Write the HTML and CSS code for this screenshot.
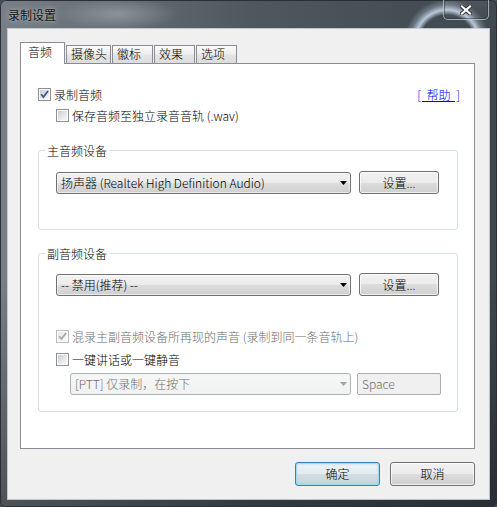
FILE: index.html
```html
<!DOCTYPE html>
<html lang="zh-CN">
<head>
<meta charset="utf-8">
<title>录制设置</title>
<link rel="stylesheet" href="styles.css">
</head>
<body>
<div class="window">
  <div class="titlebar">
    <div class="title">录制设置</div>
    <div class="close">
      <svg width="12" height="10" viewBox="0 0 12 10">
        <path d="M2 1.5 L10 8.5 M10 1.5 L2 8.5" stroke="#2a2f35" stroke-width="4" stroke-linecap="square"/>
        <path d="M2 1.5 L10 8.5 M10 1.5 L2 8.5" stroke="#ffffff" stroke-width="2.2" stroke-linecap="square"/>
      </svg>
    </div>
  </div>
  <div class="client">
    <div class="tabs">
      <div class="tab active">音频</div>
      <div class="tab">摄像头</div>
      <div class="tab">徽标</div>
      <div class="tab">效果</div>
      <div class="tab">选项</div>
    </div>
    <div class="panel">
      <div class="row-top">
        <div class="check">
          <span class="cb"><svg width="9" height="9" viewBox="0 0 9 9"><path d="M1.2 4.2 L3.4 7 L8 1" fill="none" stroke="#3d5592" stroke-width="1.8"/></svg></span>
          <span>录制音频</span>
        </div>
        <a class="help">[ 帮助 ]</a>
      </div>
      <div class="check sub">
        <span class="cb"></span>
        <span>保存音频至独立录音音轨 (.wav)</span>
      </div>

      <fieldset class="group g1">
        <legend>主音频设备</legend>
        <div class="group-body">
          <div class="dev-row">
            <div class="combo"><span>扬声器 (Realtek High Definition Audio)</span><svg class="arrow" width="7" height="4" viewBox="0 0 7 4"><path d="M0 0 H7 L3.5 4 Z" fill="#000"/></svg></div>
            <div class="btn">设置...</div>
          </div>
        </div>
      </fieldset>

      <fieldset class="group g2">
        <legend>副音频设备</legend>
        <div class="group-body">
          <div class="dev-row">
            <div class="combo"><span>-- 禁用(推荐) --</span><svg class="arrow" width="7" height="4" viewBox="0 0 7 4"><path d="M0 0 H7 L3.5 4 Z" fill="#000"/></svg></div>
            <div class="btn">设置...</div>
          </div>
          <div class="check disabled mix">
            <span class="cb"><svg width="9" height="9" viewBox="0 0 9 9"><path d="M1.2 4.2 L3.4 7 L8 1" fill="none" stroke="#a8a8a8" stroke-width="1.8"/></svg></span>
            <span>混录主副音频设备所再现的声音 (录制到同一条音轨上)</span>
          </div>
          <div class="check ptt">
            <span class="cb"></span>
            <span>一键讲话或一键静音</span>
          </div>
          <div class="ptt-row">
            <div class="combo disabled"><span>[PTT] 仅录制，在按下</span><svg class="arrow" width="7" height="4" viewBox="0 0 7 4"><path d="M0 0 H7 L3.5 4 Z" fill="#a3a3a3"/></svg></div>
            <div class="key">Space</div>
          </div>
        </div>
      </fieldset>
    </div>
    <div class="buttons">
      <div class="btn big default">确定</div>
      <div class="btn big">取消</div>
    </div>
  </div>
</div>
</body>
</html>
```

FILE: styles.css
```css
html, body {
  margin: 0;
  padding: 0;
}
body {
  width: 497px;
  height: 507px;
  overflow: hidden;
  background: #444c54;
  font-family: "Noto Sans CJK SC", "Noto Sans", sans-serif;
  font-size: 12px;
  font-weight: 300;
  color: #000;
}

.window {
  width: 497px;
  height: 507px;
  box-sizing: border-box;
  padding: 0 8px 8px 8px;
  display: flex;
  flex-direction: column;
  border-radius: 6px 6px 5px 5px;
  box-shadow: inset 0 0 0 1px #2a2f34;
  background:
    linear-gradient(to bottom, rgba(0,0,0,0) 55%, rgba(0,0,0,0.35) 100%),
    radial-gradient(circle at 447px 42px, rgba(0,0,0,0) 27px, rgba(205,222,240,0.85) 32px, rgba(205,222,240,0.3) 37px, rgba(0,0,0,0) 43px),
    radial-gradient(ellipse 60px 16px at 118px 14px, rgba(165,172,180,0.6), rgba(0,0,0,0)),
    linear-gradient(90deg, #787f87 0%, #656d75 22%, #50585f 50%, #464e56 78%, #3f474f 100%);
}

.titlebar {
  height: 29px;
  flex: none;
  display: flex;
  justify-content: space-between;
  align-items: flex-start;
}
.title {
  margin-top: 6px;
  line-height: 18px;
  color: #111;
  font-weight: 400;
  text-shadow: 0 0 6px rgba(255,255,255,0.55), 0 0 2px rgba(255,255,255,0.35);
}
.close {
  width: 46px;
  height: 20px;
  box-sizing: border-box;
  border: 1px solid rgba(190,200,210,0.75);
  border-top: none;
  border-radius: 0 0 5px 5px;
  background: linear-gradient(rgba(255,255,255,0.08), rgba(255,255,255,0.02));
  box-shadow: inset 0 0 0 1px rgba(40,45,50,0.5);
  display: flex;
  align-items: center;
  justify-content: center;
}

.client {
  flex: 1;
  background: #f0f0f0;
  padding: 13px 0 0 12px;
  box-shadow: 0 0 0 1px rgba(210,218,225,0.85);
  display: flex;
  flex-direction: column;
}

.tabs {
  display: flex;
  align-items: flex-end;
  gap: 1px;
}
.tab {
  box-sizing: border-box;
  height: 18px;
  min-width: 41px;
  padding: 0 3px 0 4px;
  line-height: 16px;
  border: 1px solid #898c95;
  border-bottom: none;
  background: linear-gradient(#fafafa 0%, #efefef 45%, #e4e4e4 55%, #dcdcdc 100%);
}
.tab.active {
  height: 22px;
  min-width: 45px;
  padding: 1px 3px 0 7px;
  margin-bottom: -1px;
  background: #fff;
  position: relative;
  z-index: 1;
}

.panel {
  width: 455px;
  height: 386px;
  box-sizing: border-box;
  border: 1px solid #898c95;
  background: #fff;
  padding: 23px 15px 0 17px;
}

.row-top {
  display: flex;
  justify-content: space-between;
  align-items: center;
  height: 15px;
}
.check {
  display: flex;
  align-items: center;
  gap: 3px;
  height: 15px;
  line-height: 15px;
  white-space: nowrap;
}
.check.sub {
  margin-top: 6px;
  margin-left: 18px;
}
.cb {
  width: 13px;
  height: 13px;
  box-sizing: border-box;
  border: 1px solid #8e8f8f;
  padding: 1px;
  flex: none;
  background:
    linear-gradient(135deg, #c9ccd3 0%, #e4e6e9 55%, #f8f8f8 100%) content-box,
    linear-gradient(#fff, #fff) padding-box;
  display: flex;
  align-items: center;
  justify-content: center;
}
.cb svg { display: block; }
.check.disabled { color: #6d6d6d; }
.check.disabled .cb {
  border-color: #bcbcbc;
  background:
    linear-gradient(135deg, #e6e6e6 0%, #f2f2f2 55%, #fbfbfb 100%) content-box,
    linear-gradient(#fff, #fff) padding-box;
}

.help {
  color: #0000ff;
  text-decoration: underline;
  line-height: 15px;
  word-spacing: 3px;
  margin-right: -1px;
  cursor: pointer;
}

.group {
  width: 420px;
  box-sizing: border-box;
  min-width: 0;
  margin: 19px 0 0 0;
  padding: 12px 0 35px 6px;
  border: 1px solid #d5dfe5;
  border-radius: 3px;
}
.group legend {
  padding: 0 2px;
  margin: 0;
  line-height: 17px;
}
.group-body {
  padding-left: 11px;
}
.g2 {
  margin-top: 15px;
  padding-top: 11px;
  padding-bottom: 16px;
}

.dev-row {
  display: flex;
  align-items: flex-end;
  gap: 8px;
}
.combo {
  box-sizing: border-box;
  width: 295px;
  height: 22px;
  border: 1px solid #707070;
  border-radius: 3px;
  padding: 0 3px 0 4px;
  display: flex;
  align-items: center;
  justify-content: space-between;
  line-height: 20px;
  white-space: nowrap;
  background: linear-gradient(#f2f2f2 0%, #ebebeb 50%, #dddddd 50%, #cfcfcf 100%);
  box-shadow: inset 0 0 0 1px rgba(255,255,255,0.6);
}
.combo.disabled {
  width: 281px;
  border-color: #adb2b5;
  color: #6d6d6d;
  background: linear-gradient(#f7f7f7, #f1f1f1);
  box-shadow: none;
}
.arrow { flex: none; display: block; }

.btn {
  box-sizing: border-box;
  width: 80px;
  height: 23px;
  border: 1px solid #707070;
  border-radius: 3px;
  display: flex;
  align-items: center;
  justify-content: center;
  line-height: 16px;
  background: linear-gradient(#f2f2f2 0%, #ebebeb 50%, #dddddd 50%, #cfcfcf 100%);
  box-shadow: inset 0 0 0 1px rgba(255,255,255,0.7);
}
.btn.big {
  width: 85px;
  height: 24px;
}
.btn.default {
  border-color: #3c7fb1;
  background: linear-gradient(#edf3f7 0%, #e3ebf0 50%, #d3dee4 50%, #c8d4db 100%);
  box-shadow: inset 0 0 0 1px #9fdcf5, inset 0 0 2px 1px rgba(120,200,240,0.5);
}

.check.mix {
  margin-top: 33px;
}
.check.ptt {
  margin-top: 8px;
}
.ptt-row {
  margin-top: 6px;
  margin-left: 14px;
  display: flex;
  gap: 6px;
}
.key {
  box-sizing: border-box;
  width: 84px;
  height: 22px;
  border: 1px solid #acacac;
  border-radius: 2px;
  background: #f0f0f0;
  color: #6d6d6d;
  padding-left: 4px;
  line-height: 20px;
}

.buttons {
  width: 455px;
  margin-top: 13px;
  display: flex;
  justify-content: flex-end;
  gap: 10px;
}
```
